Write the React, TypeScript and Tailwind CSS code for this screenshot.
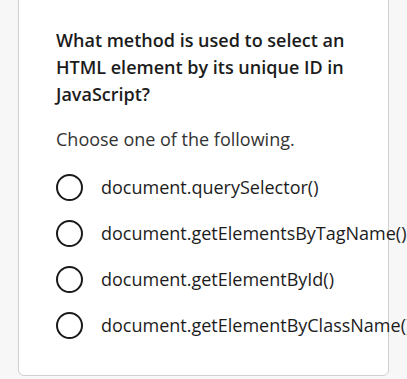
import React, { useState } from 'react';

const options = [
    'document.querySelector()',
    'document.getElementsByTagName()',
    'document.getElementById()',
    'document.getElementByClassName()',
];

const App: React.FC = () => {
    const [selected, setSelected] = useState<number | null>(null);

    return (
        <div className="min-h-screen w-full overflow-hidden bg-[#f7f7f7] font-['Open_Sans',sans-serif]">
            <div className="ml-[18px] w-[371px] -mt-2 border border-[#cfcfcf] rounded-md bg-white pl-[37px] pt-[34px] pb-[36px]">
                <h2 className="text-[18px] leading-[27px] font-semibold text-[#1c1c1c] pr-[30px]">
                    What method is used to select an HTML element by its unique ID in JavaScript?
                </h2>
                <p className="mt-[18px] text-[18px] leading-[27px] text-[#333]">Choose one of the following.</p>

                <div className="mt-[21px] flex flex-col gap-[19px]">
                    {options.map((opt, i) => (
                        <label key={opt} className="flex items-center gap-[18px] cursor-pointer whitespace-nowrap" onClick={() => setSelected(i)}>
                            <span className="w-[27px] h-[27px] shrink-0 rounded-full border-[2.5px] border-[#1a1a1a] flex items-center justify-center">
                                {selected === i && <span className="w-3 h-3 rounded-full bg-[#1a1a1a]" />}
                            </span>
                            <span className="text-[18px] leading-[27px] text-[#1c1c1c]">{opt}</span>
                        </label>
                    ))}
                </div>
            </div>
        </div>
    );
};

export default App;
